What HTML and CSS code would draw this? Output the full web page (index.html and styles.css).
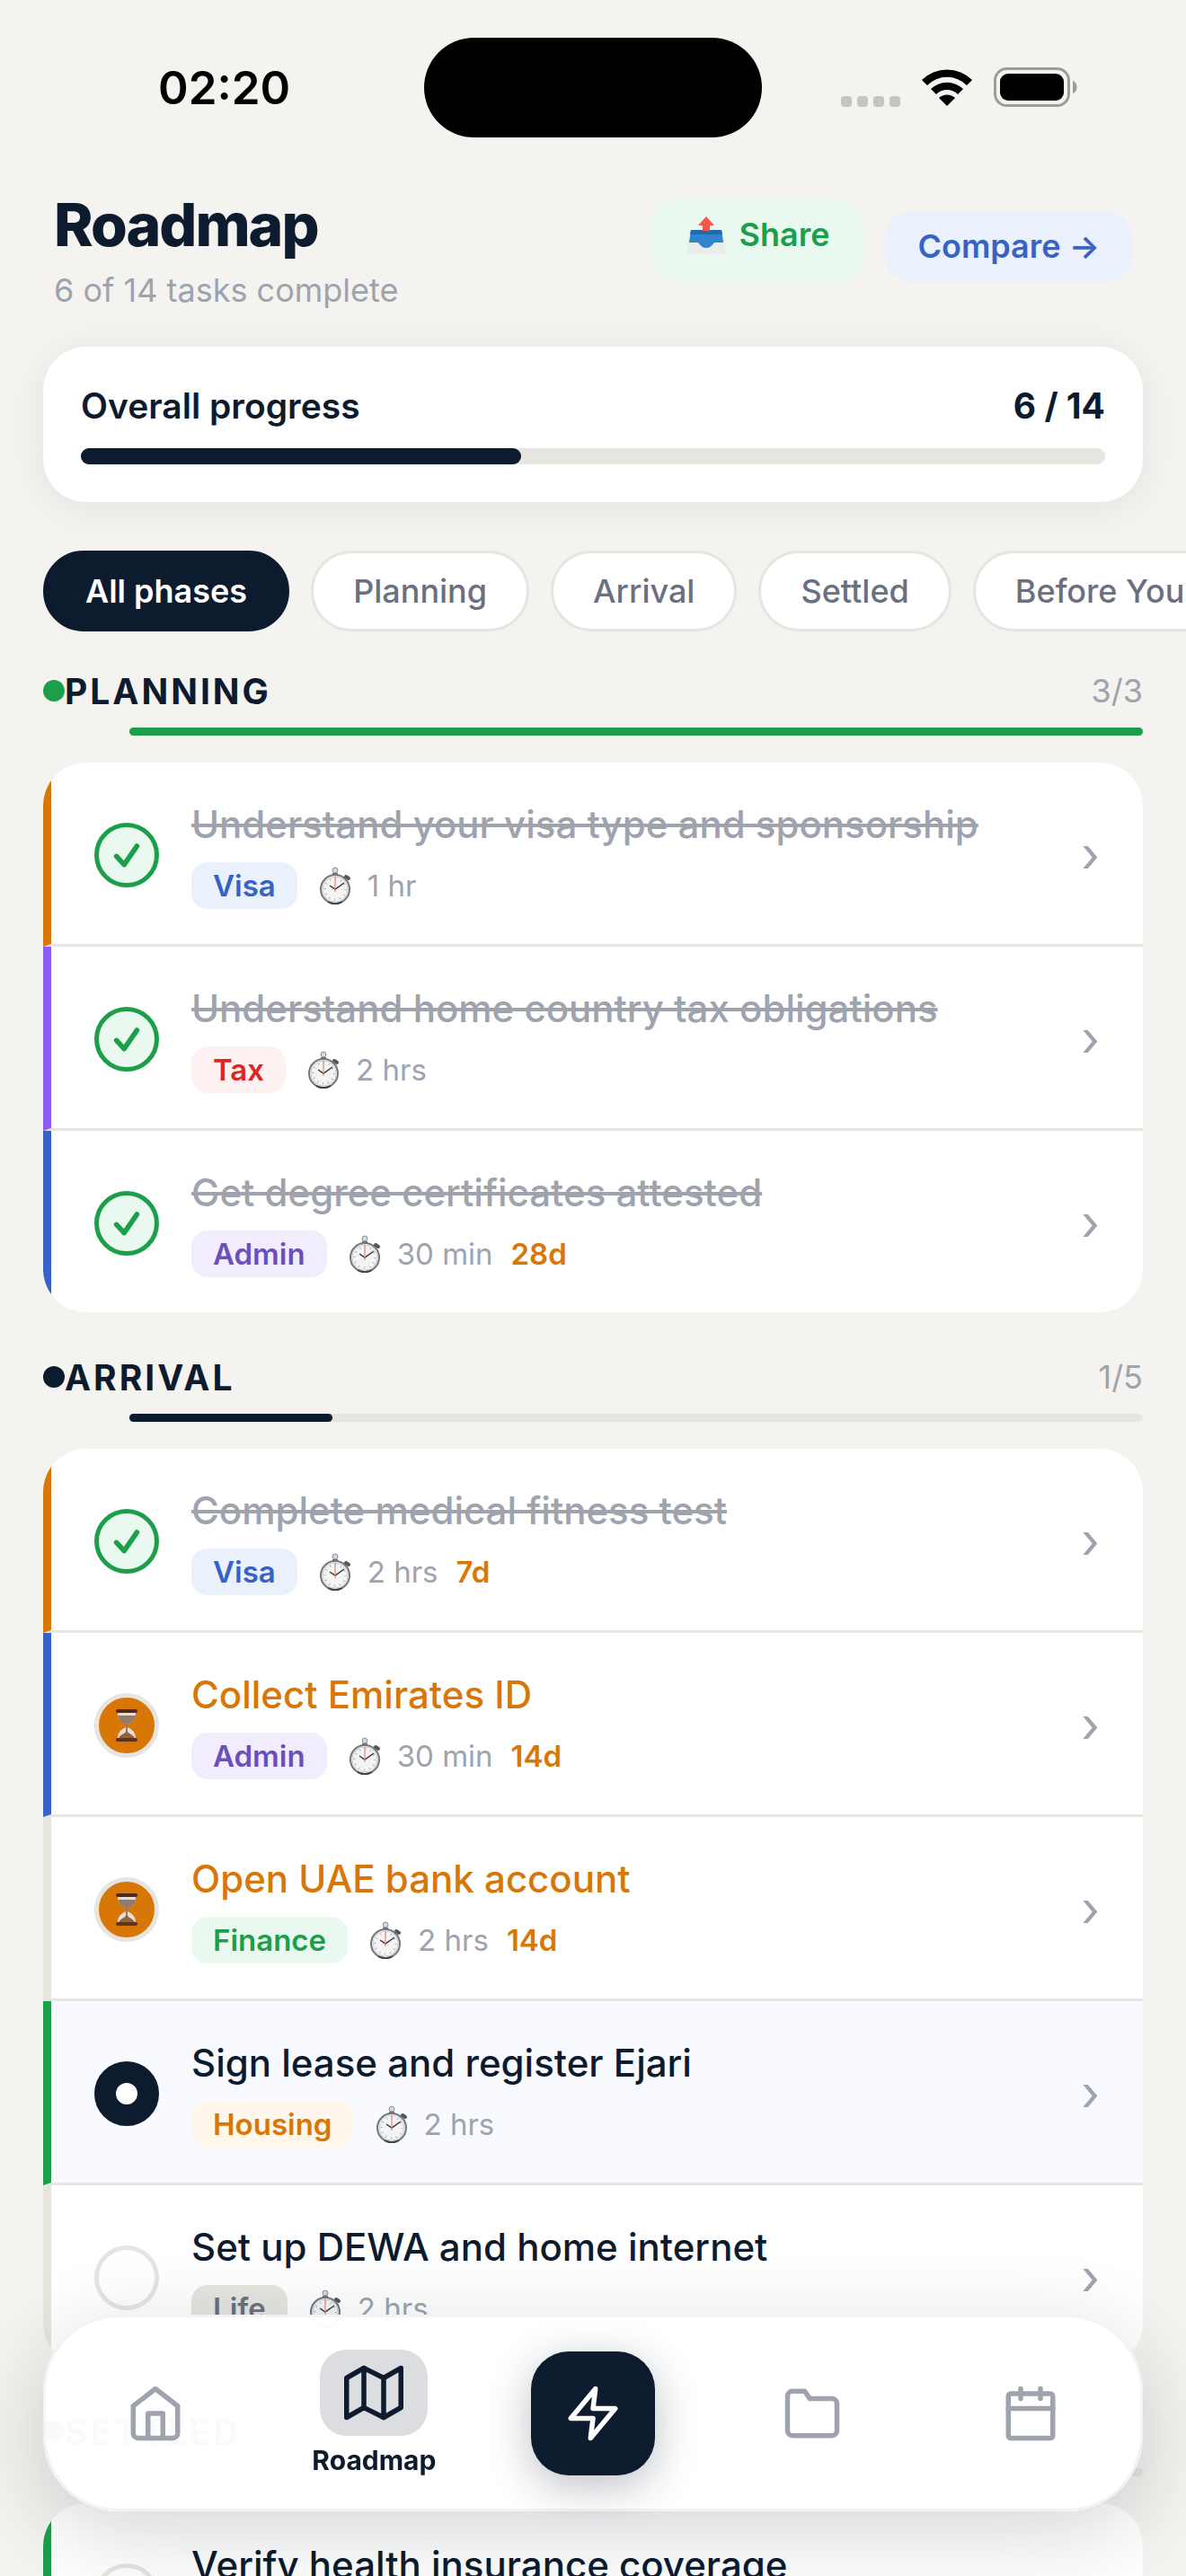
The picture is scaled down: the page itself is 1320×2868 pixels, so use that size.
FILE: index.html
```html
<!DOCTYPE html>
<html lang="en">

<head>
    <meta charset="UTF-8">
    <meta name="viewport" content="width=device-width, initial-scale=1.0">
    <title>Roadmap</title>
    <link rel="stylesheet" href="styles.css">
</head>

<body>
    <!-- shared icons -->
    <svg class="sprite" aria-hidden="true">
        <symbol id="check" viewBox="0 0 24 24">
            <polyline points="20 5 10 19.5 4 13"></polyline>
        </symbol>
        <symbol id="stopwatch" viewBox="0 0 36 42">
            <circle cx="18" cy="4" r="3" fill="#d5d8dc" stroke="#8b9097" stroke-width="1"></circle>
            <path d="M15 7h6v3h-6z" fill="#6f757c"></path>
            <path d="M30 11l3 2" stroke="#4f565c" stroke-width="4" stroke-linecap="round"></path>
            <circle cx="18" cy="25" r="16" fill="#f4f4f5" stroke="#70777e" stroke-width="2"></circle>
            <circle cx="18" cy="25" r="14" fill="none" stroke="#c9ccd0" stroke-width="1"></circle>
            <circle cx="18" cy="25" r="11.5" fill="none" stroke="#a9acb0" stroke-width="2" stroke-dasharray="1 5"></circle>
            <path d="M12 21l6 4 10-7" fill="none" stroke="#33373b" stroke-width="1.5"></path>
            <path d="M18 11v17" stroke="#ee8272" stroke-width="1.2"></path>
            <path d="M10 39a16 16 0 0 0 16 0" fill="none" stroke="#3f454b" stroke-width="2"></path>
        </symbol>
        <symbol id="hourglass" viewBox="0 0 24 36">
            <path d="M2 3c0 7 1 10 9 14v3C3 24 2 28 2 33h20c0-5-1-9-9-13v-3c8-4 9-7 9-14z" fill="#e6dfd8"></path>
            <path d="M2 7c1 6 5 8 9 10h2c4-2 8-4 9-10z" fill="#937b68"></path>
            <path d="M12 17v10" stroke="#86522e" stroke-width="1.5"></path>
            <path d="M3 32c2-4 6-4 9-8 3 4 7 4 9 8z" fill="#92623d"></path>
            <rect x="0" y="0" width="24" height="4" rx="2" fill="#4f2a18"></rect>
            <rect x="0" y="32" width="24" height="4" rx="2" fill="#5e321b"></rect>
        </symbol>
    </svg>

    <div class="screen">
        <div class="status-bar">
            <div class="status-time">02:20</div>
            <div class="island"></div>
            <div class="status-icons">
                <div class="signal"><i></i><i></i><i></i><i></i></div>
                <svg class="wifi" viewBox="0 0 58 42">
                    <path d="M1 13a40 40 0 0 1 56 0l-6 6a31 31 0 0 0-44 0z"></path>
                    <path d="M11 23a26 26 0 0 1 36 0l-6 6a17 17 0 0 0-24 0z"></path>
                    <path d="M20 33a13 13 0 0 1 18 0l-9 9z"></path>
                </svg>
                <svg class="battery" viewBox="0 0 94 44">
                    <rect x="1.5" y="1.5" width="82" height="41" rx="13" fill="none" stroke="#9b9b99" stroke-width="3"></rect>
                    <rect x="7" y="7" width="71" height="30" rx="9"></rect>
                    <path d="M88 15c6 2 6 12 0 14z" fill="#9b9b99"></path>
                </svg>
            </div>
        </div>

        <header class="header">
            <div>
                <h1>Roadmap</h1>
                <p class="subtitle">6 of 14 tasks complete</p>
            </div>
            <div class="actions">
                <button type="button" class="btn share">
                    <svg class="outbox" viewBox="0 0 44 44" aria-hidden="true">
                        <path d="M4 17h36l3 14v10a2 2 0 0 1-2 2H3a2 2 0 0 1-2-2V31z" fill="#ececec"></path>
                        <path d="M5 16h34l2 14h-9c-3 0-3 6-10 6s-7-6-10-6H3z" fill="#2f84d0"></path>
                        <path d="M5 16h34l1 5H4z" fill="#226bad"></path>
                        <path d="M22 1l9 10h-5v6h-8v-6h-5z" fill="#fb5549"></path>
                    </svg>
                    Share
                </button>
                <a href="#" class="btn compare">Compare →</a>
            </div>
        </header>

        <section class="progress-card">
            <div class="progress-row">
                <span>Overall progress</span>
                <strong>6 / 14</strong>
            </div>
            <div class="progress-track">
                <div class="progress-fill" style="width: 43%"></div>
            </div>
        </section>

        <div class="chips">
            <button type="button" class="chip active">All phases</button>
            <button type="button" class="chip">Planning</button>
            <button type="button" class="chip">Arrival</button>
            <button type="button" class="chip">Settled</button>
            <button type="button" class="chip">Before You Go</button>
        </div>

        <section class="phase">
            <div class="phase-head">
                <span class="dot green"></span>
                <h2>Planning</h2>
                <span class="count">3/3</span>
            </div>
            <div class="phase-track">
                <div class="phase-fill green" style="width: 100%"></div>
            </div>
            <div class="tasks">
                <a href="#" class="task high done">
                    <span class="status"><svg><use href="#check"></use></svg></span>
                    <div class="info">
                        <h3>Understand your visa type and sponsorship</h3>
                        <div class="meta">
                            <span class="tag visa">Visa</span>
                            <span class="time"><svg><use href="#stopwatch"></use></svg>1 hr</span>
                        </div>
                    </div>
                    <span class="arrow">›</span>
                </a>
                <a href="#" class="task purple done">
                    <span class="status"><svg><use href="#check"></use></svg></span>
                    <div class="info">
                        <h3>Understand home country tax obligations</h3>
                        <div class="meta">
                            <span class="tag tax">Tax</span>
                            <span class="time"><svg><use href="#stopwatch"></use></svg>2 hrs</span>
                        </div>
                    </div>
                    <span class="arrow">›</span>
                </a>
                <a href="#" class="task blue done">
                    <span class="status"><svg><use href="#check"></use></svg></span>
                    <div class="info">
                        <h3>Get degree certificates attested</h3>
                        <div class="meta">
                            <span class="tag admin">Admin</span>
                            <span class="time"><svg><use href="#stopwatch"></use></svg>30 min</span>
                            <span class="due">28d</span>
                        </div>
                    </div>
                    <span class="arrow">›</span>
                </a>
            </div>
        </section>

        <section class="phase">
            <div class="phase-head">
                <span class="dot"></span>
                <h2>Arrival</h2>
                <span class="count">1/5</span>
            </div>
            <div class="phase-track">
                <div class="phase-fill" style="width: 20%"></div>
            </div>
            <div class="tasks">
                <a href="#" class="task high done">
                    <span class="status"><svg><use href="#check"></use></svg></span>
                    <div class="info">
                        <h3>Complete medical fitness test</h3>
                        <div class="meta">
                            <span class="tag visa">Visa</span>
                            <span class="time"><svg><use href="#stopwatch"></use></svg>2 hrs</span>
                            <span class="due">7d</span>
                        </div>
                    </div>
                    <span class="arrow">›</span>
                </a>
                <a href="#" class="task blue waiting">
                    <span class="status"><svg><use href="#hourglass"></use></svg></span>
                    <div class="info">
                        <h3>Collect Emirates ID</h3>
                        <div class="meta">
                            <span class="tag admin">Admin</span>
                            <span class="time"><svg><use href="#stopwatch"></use></svg>30 min</span>
                            <span class="due">14d</span>
                        </div>
                    </div>
                    <span class="arrow">›</span>
                </a>
                <a href="#" class="task waiting">
                    <span class="status"><svg><use href="#hourglass"></use></svg></span>
                    <div class="info">
                        <h3>Open UAE bank account</h3>
                        <div class="meta">
                            <span class="tag finance">Finance</span>
                            <span class="time"><svg><use href="#stopwatch"></use></svg>2 hrs</span>
                            <span class="due">14d</span>
                        </div>
                    </div>
                    <span class="arrow">›</span>
                </a>
                <a href="#" class="task low current">
                    <span class="status"></span>
                    <div class="info">
                        <h3>Sign lease and register Ejari</h3>
                        <div class="meta">
                            <span class="tag housing">Housing</span>
                            <span class="time"><svg><use href="#stopwatch"></use></svg>2 hrs</span>
                        </div>
                    </div>
                    <span class="arrow">›</span>
                </a>
                <a href="#" class="task">
                    <span class="status"></span>
                    <div class="info">
                        <h3>Set up DEWA and home internet</h3>
                        <div class="meta">
                            <span class="tag life">Life</span>
                            <span class="time"><svg><use href="#stopwatch"></use></svg>2 hrs</span>
                        </div>
                    </div>
                    <span class="arrow">›</span>
                </a>
            </div>
        </section>

        <section class="phase">
            <div class="phase-head">
                <span class="dot"></span>
                <h2>Settled</h2>
            </div>
            <div class="phase-track"></div>
            <div class="tasks">
                <a href="#" class="task low">
                    <span class="status"></span>
                    <div class="info">
                        <h3>Verify health insurance coverage</h3>
                    </div>
                </a>
            </div>
        </section>
    </div>

    <nav class="tab-bar">
        <a href="#" class="tab" aria-label="Home">
            <svg viewBox="0 0 24 24"><path d="M3 9l9-7 9 7v11a2 2 0 0 1-2 2H5a2 2 0 0 1-2-2z"></path><polyline points="9 22 9 12 15 12 15 22"></polyline></svg>
        </a>
        <a href="#" class="tab selected">
            <span class="pill"><svg viewBox="0 0 24 24"><polygon points="1 6 1 22 8 18 16 22 23 18 23 2 16 6 8 2 1 6"></polygon><path d="M8 2v16M16 6v16"></path></svg></span>
            Roadmap
        </a>
        <div class="tab">
            <button type="button" class="fab" aria-label="Quick actions">
                <svg viewBox="0 0 24 24"><polygon points="13 2 3 14 12 14 11 22 21 10 12 10 13 2"></polygon></svg>
            </button>
        </div>
        <a href="#" class="tab" aria-label="Documents">
            <svg viewBox="0 0 24 24"><path d="M22 19a2 2 0 0 1-2 2H4a2 2 0 0 1-2-2V5a2 2 0 0 1 2-2h5l2 3h9a2 2 0 0 1 2 2z"></path></svg>
        </a>
        <a href="#" class="tab" aria-label="Calendar">
            <svg viewBox="0 0 24 24"><rect x="3" y="4" width="18" height="18" rx="1"></rect><path d="M16 2v4M8 2v4M3 10h18"></path></svg>
        </a>
    </nav>
</body>

</html>
```
FILE: styles.css
```css
* {
    box-sizing: border-box;
}

body {
    font-family: Inter, "Liberation Sans", sans-serif;
    margin: 0;
    background-color: #f4f3ef;
    color: #0d1b2e;
}

h1,
h2,
h3,
p {
    margin: 0;
}

a {
    color: inherit;
    text-decoration: none;
}

button {
    font-family: inherit;
    border: none;
    cursor: pointer;
}

.sprite {
    display: none;
}

.screen {
    height: 100vh;
    overflow-x: hidden;
    overflow-y: auto;
    scrollbar-width: none;
    padding: 0 48px;
}

/* Status bar */
.status-bar {
    display: grid;
    grid-template-columns: 1fr 376px 1fr;
    align-items: center;
    height: 210px;
    padding-bottom: 16px;
    color: #000;
}

.status-time {
    font-size: 51px;
    font-weight: 600;
    padding-left: 128px;
}

.island {
    height: 111px;
    border-radius: 56px;
    background-color: #000;
}

.status-icons {
    display: flex;
    align-items: center;
    justify-content: flex-end;
    gap: 23px;
    padding-right: 72px;
}

.signal {
    display: flex;
    gap: 6px;
    align-self: flex-end;
}

.signal i {
    width: 12px;
    height: 12px;
    border-radius: 4px;
    background-color: #c5c4c1;
}

.wifi {
    width: 58px;
    height: 42px;
}

.battery {
    width: 94px;
    height: 44px;
}

/* Header */
.header {
    display: flex;
    justify-content: space-between;
    align-items: flex-start;
    padding: 0 12px;
}

h1 {
    font-size: 66px;
    line-height: 81px;
    font-weight: 800;
    letter-spacing: -2px;
}

.subtitle {
    font-size: 36px;
    line-height: 45px;
    margin-top: 10px;
    color: #9ea3ae;
}

.actions {
    display: flex;
    align-items: flex-end;
    gap: 24px;
    padding-top: 12px;
}

.btn {
    display: flex;
    align-items: flex-start;
    gap: 15px;
    padding: 18px 36px;
    border-radius: 30px;
    font-size: 36px;
    line-height: 43px;
    font-weight: 600;
}

.share {
    padding: 18px 38px 30px;
    background-color: #eaf9ef;
    color: #1d9e4b;
}

.outbox {
    width: 44px;
    height: 44px;
}

.compare {
    background-color: #ebf1fc;
    color: #3663c4;
}

/* Overall progress */
.progress-card {
    margin-top: 40px;
    padding: 42px;
    border-radius: 48px;
    background-color: #fff;
    box-shadow: 0 6px 48px rgba(13, 27, 46, 0.07);
}

.progress-row {
    display: flex;
    justify-content: space-between;
    margin-bottom: 24px;
    font-size: 39px;
    line-height: 47px;
    font-weight: 600;
}

.progress-row strong {
    font-weight: 700;
}

.progress-track {
    height: 18px;
    border-radius: 9px;
    background-color: #e6e5e0;
}

.progress-fill {
    height: 100%;
    border-radius: 9px;
    background-color: #0d1b2e;
}

/* Phase filter */
.chips {
    display: flex;
    gap: 24px;
    margin: 54px -48px 0 0;
    overflow: hidden;
}

.chip {
    flex: none;
    height: 90px;
    padding: 0 44px;
    border: 3px solid #e6e5e0;
    border-radius: 45px;
    background-color: #fff;
    color: #6b7080;
    font-size: 36px;
    font-weight: 500;
}

.chip.active {
    border-color: #0d1b2e;
    background-color: #0d1b2e;
    color: #fff;
    font-weight: 600;
}

/* Phases */
.phase {
    padding-top: 48px;
}

.chips + .phase {
    padding-top: 42px;
}

.phase-head {
    display: flex;
    align-items: center;
    height: 48px;
}

.dot {
    width: 24px;
    height: 24px;
    border-radius: 50%;
    background-color: #0d1b2e;
}

h2 {
    flex: 1;
    font-size: 39px;
    font-weight: 700;
    letter-spacing: 3px;
    text-transform: uppercase;
}

.count {
    font-size: 36px;
    color: #9ea3ae;
}

.phase-track {
    height: 9px;
    margin: 17px 0 30px 96px;
    border-radius: 5px;
    background-color: #e6e5e0;
}

.phase-fill {
    height: 100%;
    border-radius: 5px;
    background-color: #0d1b2e;
}

.green {
    background-color: #1d9e4b;
}

.tasks {
    overflow: hidden;
    border-radius: 48px;
    background-color: #fff;
}

.task {
    display: flex;
    align-items: center;
    gap: 36px;
    padding: 42px 48px 39px;
    border-left: 9px solid #e6e5e0;
    border-bottom: 3px solid #e6e5e0;
}

.task:last-child {
    border-bottom: none;
}

.task.high {
    border-left-color: #d97706;
}

.task.purple {
    border-left-color: #8b5cf6;
}

.task.blue {
    border-left-color: #3663c4;
}

.task.low {
    border-left-color: #1d9e4b;
}

.status {
    display: flex;
    align-items: center;
    justify-content: center;
    width: 72px;
    height: 72px;
    border: 5px solid #e6e5e0;
    border-radius: 50%;
}

.info {
    flex: 1;
    min-height: 121px;
}

h3 {
    font-size: 42px;
    line-height: 54px;
    font-weight: 500;
}

.meta {
    display: flex;
    align-items: center;
    margin-top: 15px;
    font-size: 33px;
    line-height: 40px;
}

.tag {
    padding: 6px 24px;
    border-radius: 18px;
    font-weight: 600;
}

.time {
    display: flex;
    align-items: center;
    gap: 18px;
    height: 52px;
    margin-left: 24px;
    color: #9ea3ae;
}

.time svg {
    width: 36px;
    height: 42px;
}

.due {
    margin-left: 20px;
    color: #d97706;
    font-weight: 600;
}

.arrow {
    font-size: 54px;
    line-height: 60px;
    color: #9ea3ae;
}

.visa {
    background-color: #ebf1fc;
    color: #3663c4;
}

.tax {
    background-color: #fef1f1;
    color: #dc2626;
}

.admin {
    background-color: #f2edfe;
    color: #6b4fbb;
}

.finance {
    background-color: #eaf9ef;
    color: #1d9e4b;
}

.housing {
    background-color: #fff7eb;
    color: #d97706;
}

.life {
    background-color: #e6e5e0;
    color: #6b7080;
}

.done h3 {
    color: #9ea3ae;
    text-decoration: line-through;
}

.done .status {
    border-color: #1d9e4b;
    background-color: #eaf9ef;
}

.done .status svg {
    width: 34px;
    height: 34px;
    fill: none;
    stroke: #1d9e4b;
    stroke-width: 4;
    stroke-linecap: round;
    stroke-linejoin: round;
}

.waiting h3 {
    color: #d97706;
}

.waiting .status {
    background-color: #d97706;
}

.waiting .status svg {
    width: 24px;
    height: 36px;
}

.current {
    background-color: #f8faff;
}

.current .status {
    border: 24px solid #0d1b2e;
    background-color: #fff;
}

/* Bottom navigation */
.tab-bar {
    position: fixed;
    left: 48px;
    right: 48px;
    bottom: 72px;
    display: flex;
    align-items: center;
    height: 219px;
    border: 3px solid #f3f3f3;
    border-radius: 84px;
    background-color: rgba(255, 255, 255, 0.98);
    box-shadow: 0 24px 96px rgba(13, 27, 46, 0.18);
}

.tab {
    flex: 1;
    display: flex;
    flex-direction: column;
    align-items: center;
    gap: 9px;
    color: #9ea3ae;
    font-size: 30px;
    line-height: 36px;
    font-weight: 700;
}

.tab svg {
    width: 66px;
    height: 66px;
    fill: none;
    stroke: currentColor;
    stroke-width: 2;
    stroke-linecap: round;
    stroke-linejoin: round;
}

.selected {
    color: #0d1b2e;
}

.pill {
    display: flex;
    align-items: center;
    justify-content: center;
    width: 120px;
    height: 96px;
    border-radius: 30px;
    background-color: #dcdde1;
}

.fab {
    display: flex;
    align-items: center;
    justify-content: center;
    width: 138px;
    height: 138px;
    border-radius: 42px;
    background-color: #0d1b2e;
    color: #fff;
    box-shadow: 0 12px 48px rgba(13, 27, 46, 0.28);
}
```
